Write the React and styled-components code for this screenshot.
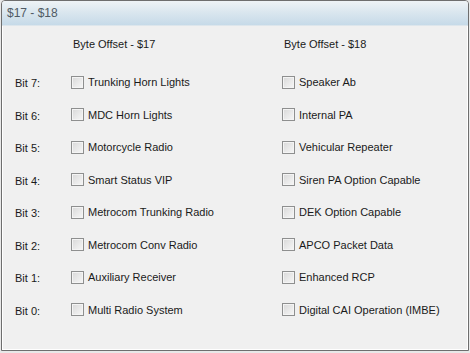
import React from "react";
import styled, { createGlobalStyle } from "styled-components";

const Global = createGlobalStyle`
  html, body { margin: 0; padding: 0; background: #f0f0f0; }
  body { font-family: "Liberation Sans", Arial, sans-serif; }
`;

const Outer = styled.div`
  width: 470px;
  height: 353px;
  box-sizing: border-box;
  padding: 0 1px 2px 1px;
  background: #e8e8e8;
`;

const Frame = styled.div`
  height: 100%;
  box-sizing: border-box;
  border: 1px solid #6e6e6e;
  border-radius: 4px 4px 0 0;
  background: #f0f0f0;
  display: flex;
  flex-direction: column;
  overflow: hidden;
`;

const TitleBar = styled.div`
  height: 24px;
  flex: none;
  display: flex;
  align-items: center;
  padding-left: 5px;
  background: linear-gradient(to bottom, #eef3f6 0%, #dbe7ef 45%, #c6dae8 100%);
  border-bottom: 1px solid #dde6ec;
  font-size: 12px;
  color: #505a64;
`;

const Body = styled.div`
  flex: 1;
  border: 1px solid #ffffff;
  border-top: none;
  padding: 0 0 0 12px;
  font-size: 11px;
  color: #1a1a1a;
`;

const Grid = styled.div`
  display: grid;
  grid-template-columns: 56px 211px 1fr;
  grid-template-rows: 40px;
  grid-auto-rows: 32.5px;
  align-items: center;
`;

const Header = styled.div`
  grid-column: ${(p) => p.$col};
  align-self: start;
  padding: 12px 0 0 2px;
`;

const BitLabel = styled.div`
  grid-column: 1;
  padding: 2px 0 0 0;
`;

const Check = styled.label`
  display: flex;
  align-items: center;
  gap: 4px;
  white-space: nowrap;
`;

const Box = styled.span`
  width: 11px;
  height: 11px;
  flex: none;
  border: 1px solid #8e8f8f;
  background: linear-gradient(135deg, #d8d8d8 0%, #ebebeb 60%, #f6f6f6 100%);
  box-shadow: inset 0 0 0 1px #f4f4f4;
`;

const left = [
  "Trunking Horn Lights",
  "MDC Horn Lights",
  "Motorcycle Radio",
  "Smart Status VIP",
  "Metrocom Trunking Radio",
  "Metrocom Conv Radio",
  "Auxiliary Receiver",
  "Multi Radio System",
];
const right = [
  "Speaker Ab",
  "Internal PA",
  "Vehicular Repeater",
  "Siren PA Option Capable",
  "DEK Option Capable",
  "APCO Packet Data",
  "Enhanced RCP",
  "Digital CAI Operation (IMBE)",
];

export default function App() {
  return (
    <Outer>
      <Global />
      <Frame>
        <TitleBar>$17 - $18</TitleBar>
        <Body>
          <Grid>
            <Header $col={2}>Byte Offset - $17</Header>
            <Header $col={3}>Byte Offset - $18</Header>
            {left.map((l, i) => (
              <React.Fragment key={i}>
                <BitLabel>Bit {7 - i}:</BitLabel>
                <Check>
                  <Box />
                  {l}
                </Check>
                <Check>
                  <Box />
                  {right[i]}
                </Check>
              </React.Fragment>
            ))}
          </Grid>
        </Body>
      </Frame>
    </Outer>
  );
}
